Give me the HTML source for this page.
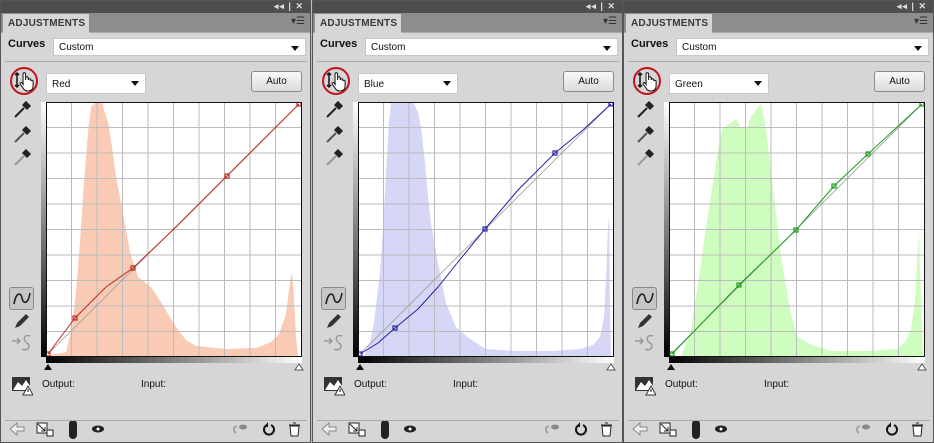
<!DOCTYPE html>
<html><head><meta charset="utf-8"><style>
*{margin:0;padding:0;box-sizing:border-box}
body{width:934px;height:443px;background:#bdbdbd;position:relative;overflow:hidden;font-family:"Liberation Sans",sans-serif}
.p{position:absolute;top:0;width:311px;height:443px;background:#d6d6d6;border:1px solid #555;overflow:hidden}
.a{position:absolute}
.top{left:0;top:0;width:100%;height:12px;background:#4e4e4e}
.top span{position:absolute;right:6px;top:0px;font-size:9px;line-height:11px;color:#ddd;font-weight:bold;letter-spacing:1px}
.tabbar{left:0;top:12px;width:100%;height:20px;background:#8d8d8d;border-bottom:1px solid #aaa}
.tab{left:2px;top:13px;width:86px;height:20px;background:#d6d6d6;font-size:10px;font-weight:bold;color:#3a3a3a;padding:4px 0 0 5px;white-space:nowrap;letter-spacing:0.2px}
.menu{right:5px;top:16px;font-size:10px;line-height:10px;color:#333}
.lbl{font-size:11px;font-weight:bold;color:#111}
.dd{background:#fff;border:1px solid #c8c8c8;font-size:10px;color:#111;padding:3px 0 0 5px}
.dd:after{content:"";position:absolute;right:6px;top:7px;border-left:4px solid transparent;border-right:4px solid transparent;border-top:5px solid #111}
.sep{height:1px;background:#a9a9a9}
.auto{left:250px;top:70px;width:51px;height:21px;border:1px solid #8a8a8a;border-radius:3px;background:linear-gradient(#f8f8f8,#dcdcdc);font-size:10px;text-align:center;padding-top:4px;color:#111}
.circ{left:9px;top:66px;width:28px;height:28px;border:2px solid #c0141c;border-radius:50%}
.graph{left:45px;top:101px}
.vg{left:40px;top:101px;width:5px;height:255px;background:linear-gradient(#fff,#000)}
.hg{left:45px;top:356px;width:256px;height:6px;background:linear-gradient(90deg,#000,#fff)}
.txt{font-size:10px;color:#111}
.btn{left:8px;top:286px;width:25px;height:23px;border:1px solid #8a8a8a;border-radius:3px;background:#c6c6c6}
</style></head><body>

<!-- PANEL 1 -->
<div class="p" style="left:0">
<div class="a top"><span>◂◂ | ✕</span></div>
<div class="a tabbar"></div>
<div class="a tab">ADJUSTMENTS</div>
<div class="a menu">▾☰</div>
<div class="a lbl" style="left:7px;top:37px">Curves</div>
<div class="a dd" style="left:52px;top:37px;width:253px;height:18px">Custom</div>
<div class="a sep" style="left:4px;top:60px;width:302px"></div>
<div class="a circ"></div>
<svg class="a" style="left:12px;top:70px" width="22" height="22" viewBox="0 0 22 22"><path d="M4 2v14M2 4l2-2 2 2M2 14l2 2 2-2" stroke="#111" fill="none" stroke-width="1.5"/><path d="M10 8v-5a1.3 1.3 0 0 1 2.6 0v6v-2a1.3 1.3 0 0 1 2.6 0v2a1.3 1.3 0 0 1 2.6 0v1a1.3 1.3 0 0 1 2.3 0v5c0 3-2 5-5 5h-1c-2 0-3-1-4-3l-3-4c-.5-1 1-2 2-1l1 1.5z" fill="#fff" stroke="#111"/></svg>
<div class="a dd" style="left:45px;top:72px;width:100px;height:21px;padding-top:5px">Red</div>
<div class="a auto">Auto</div>
<svg class="a" style="left:11px;top:100px" width="20" height="66" viewBox="0 0 20 66"><g stroke="#222" stroke-width="1.5"><path d="M3 16l9-9" stroke-width="2"/><path d="M11 4l3-3 4 4-3 3z" fill="#222"/><path d="M3 41l9-9" stroke="#555" stroke-width="2"/><path d="M11 29l3-3 4 4-3 3z" fill="#222"/><path d="M3 64l9-9" stroke="#999" stroke-width="2"/><path d="M11 52l3-3 4 4-3 3z" fill="#222"/></g></svg>
<div class="a vg"></div>
<svg class="a graph" width="256" height="255" viewBox="0 0 256 255">
<rect x="0" y="0" width="256" height="255" fill="#fff"/>
<polygon fill="#f9cbb5" points="0,254 20,250 26,225 30,190 34,140 38,80 42,30 45,5 50,0 56,0 58,8 62,20 66,45 70,75 76,105 80,128 84,150 92,175 105,185 115,200 122,212 130,225 140,238 150,244 180,247 210,246 225,240 233,232 240,212 244,180 246,170 248,195 250,235 252,254"/>
<g stroke="#bbb" stroke-width="1"><path d="M25.5 0v255M51 0v255M76.5 0v255M102 0v255M127.5 0v255M153 0v255M178.5 0v255M204 0v255M229.5 0v255M0 25.5h256M0 51h256M0 76.5h256M0 102h256M0 127.5h256M0 153h256M0 178.5h256M0 204h256M0 229.5h256"/></g>
<path d="M2 252L253 2" stroke="#999" stroke-width="0.8"/>
<polyline fill="none" stroke="#c02a1c" stroke-width="1" points="2,252 29,216 60,185 87,166 130,125 181,74 253,2"/>
<g fill="none" stroke="#c02a1c" stroke-width="1.2"><rect x="0" y="250" width="4" height="4"/><rect x="27" y="214" width="4" height="4"/><rect x="85" y="164" width="4" height="4"/><rect x="179" y="72" width="4" height="4"/><rect x="251" y="0" width="4" height="4"/></g>
<rect x="0.5" y="0.5" width="255" height="254" fill="none" stroke="#111"/>
</svg>
<div class="a hg"></div>
<svg class="a" style="left:42px;top:362px" width="262" height="8"><path d="M1 7l4-6 4 6z" fill="#111"/><path d="M252 7l4-6 4 6z" fill="#fff" stroke="#555"/></svg>
<div class="a btn"></div>
<svg class="a" style="left:10px;top:288px" width="22" height="19"><path d="M3 15C5 3 10 3 11 9s6 7 8-5" fill="none" stroke="#222" stroke-width="1.6"/></svg>
<svg class="a" style="left:11px;top:311px" width="20" height="18"><path d="M3 16l2-5 9-9 3 3-9 9z" fill="#333"/></svg>
<svg class="a" style="left:9px;top:332px" width="24" height="20" fill="none" stroke="#999" stroke-width="1.5"><path d="M2 8h8M7 5l3 3-3 3"/><path d="M20 3c-6-2-8 4-3 7s0 9-5 6"/></svg>
<svg class="a" style="left:10px;top:375px" width="22" height="20"><rect x="1" y="1" width="18" height="14" fill="#333"/><path d="M2 14l5-8 4 4 4-6 4 6v4z" fill="#fff"/><path d="M12 19l5-9 5 9z" fill="#fff" stroke="#333"/><path d="M17 13v3" stroke="#111"/></svg>
<div class="a txt" style="left:41px;top:378px">Output:</div>
<div class="a txt" style="left:140px;top:378px">Input:</div>
<div class="a sep" style="left:4px;top:419px;width:302px"></div>
<svg class="a" style="left:6px;top:420px" width="300" height="18"><path d="M3 8l7-6v4h7v4h-7v4z" fill="#eee" stroke="#888"/><rect x="30" y="2" width="10" height="10" fill="#fff" stroke="#222"/><path d="M31 3l7 7M38 6v4h-4" stroke="#222" fill="none"/><rect x="40" y="9" width="6" height="6" fill="#fff" stroke="#222"/><path d="M62 3a4 4 0 0 1 8 0v11a4 4 0 0 1-8 0z" fill="#222"/><ellipse cx="91" cy="8" rx="6" ry="3.5" fill="#222"/><circle cx="91" cy="8" r="1.5" fill="#fff"/><path d="M229 12c-3-2-3-6 1-7" stroke="#999" fill="none" stroke-width="1.6"/><ellipse cx="236" cy="6" rx="4" ry="2.5" fill="#888"/><path d="M260 4a5 5 0 1 0 4 0" stroke="#111" stroke-width="2" fill="none"/><path d="M261 1v5h-4" fill="#111"/><path d="M283 5h9l-1 10h-7z" fill="#fff" stroke="#222"/><path d="M282 4h11M286 2h3" stroke="#222"/></svg>
</div>

<!-- PANEL 2 -->
<div class="p" style="left:312px">
<div class="a top"><span>◂◂ | ✕</span></div>
<div class="a tabbar"></div>
<div class="a tab">ADJUSTMENTS</div>
<div class="a menu">▾☰</div>
<div class="a lbl" style="left:7px;top:37px">Curves</div>
<div class="a dd" style="left:52px;top:37px;width:253px;height:18px">Custom</div>
<div class="a sep" style="left:4px;top:60px;width:302px"></div>
<div class="a circ"></div>
<svg class="a" style="left:12px;top:70px" width="22" height="22" viewBox="0 0 22 22"><path d="M4 2v14M2 4l2-2 2 2M2 14l2 2 2-2" stroke="#111" fill="none" stroke-width="1.5"/><path d="M10 8v-5a1.3 1.3 0 0 1 2.6 0v6v-2a1.3 1.3 0 0 1 2.6 0v2a1.3 1.3 0 0 1 2.6 0v1a1.3 1.3 0 0 1 2.3 0v5c0 3-2 5-5 5h-1c-2 0-3-1-4-3l-3-4c-.5-1 1-2 2-1l1 1.5z" fill="#fff" stroke="#111"/></svg>
<div class="a dd" style="left:45px;top:72px;width:100px;height:21px;padding-top:5px">Blue</div>
<div class="a auto">Auto</div>
<svg class="a" style="left:11px;top:100px" width="20" height="66" viewBox="0 0 20 66"><g stroke="#222" stroke-width="1.5"><path d="M3 16l9-9" stroke-width="2"/><path d="M11 4l3-3 4 4-3 3z" fill="#222"/><path d="M3 41l9-9" stroke="#555" stroke-width="2"/><path d="M11 29l3-3 4 4-3 3z" fill="#222"/><path d="M3 64l9-9" stroke="#999" stroke-width="2"/><path d="M11 52l3-3 4 4-3 3z" fill="#222"/></g></svg>
<div class="a vg"></div>
<svg class="a graph" width="256" height="255" viewBox="0 0 256 255">
<rect x="0" y="0" width="256" height="255" fill="#fff"/>
<polygon fill="#d6d6f7" points="6,254 12,240 16,220 22,170 25,127 28,71 31,20 33,0 55,0 60,10 63,25 67,61 70,95 73,121 80,161 88,201 98,225 112,237 128,247 160,249 195,249 222,247 235,243 242,235 246,215 248,177 250,125 251,114 252,200 253,254"/>
<g stroke="#bbb" stroke-width="1"><path d="M25.5 0v255M51 0v255M76.5 0v255M102 0v255M127.5 0v255M153 0v255M178.5 0v255M204 0v255M229.5 0v255M0 25.5h256M0 51h256M0 76.5h256M0 102h256M0 127.5h256M0 153h256M0 178.5h256M0 204h256M0 229.5h256"/></g>
<path d="M2 252L253 2" stroke="#999" stroke-width="0.8"/>
<polyline fill="none" stroke="#2424a8" stroke-width="1" points="2,252 20,241 37,226 60,207 80,185 100,160 127,127 160,88 197,51 225,28 253,2"/>
<g fill="none" stroke="#2424a8" stroke-width="1.2"><rect x="0" y="250" width="4" height="4"/><rect x="35" y="224" width="4" height="4"/><rect x="125" y="125" width="4" height="4"/><rect x="195" y="49" width="4" height="4"/><rect x="251" y="0" width="4" height="4"/></g>
<rect x="0.5" y="0.5" width="255" height="254" fill="none" stroke="#111"/>
</svg>
<div class="a hg"></div>
<svg class="a" style="left:42px;top:362px" width="262" height="8"><path d="M1 7l4-6 4 6z" fill="#111"/><path d="M252 7l4-6 4 6z" fill="#fff" stroke="#555"/></svg>
<div class="a btn"></div>
<svg class="a" style="left:10px;top:288px" width="22" height="19"><path d="M3 15C5 3 10 3 11 9s6 7 8-5" fill="none" stroke="#222" stroke-width="1.6"/></svg>
<svg class="a" style="left:11px;top:311px" width="20" height="18"><path d="M3 16l2-5 9-9 3 3-9 9z" fill="#333"/></svg>
<svg class="a" style="left:9px;top:332px" width="24" height="20" fill="none" stroke="#999" stroke-width="1.5"><path d="M2 8h8M7 5l3 3-3 3"/><path d="M20 3c-6-2-8 4-3 7s0 9-5 6"/></svg>
<svg class="a" style="left:10px;top:375px" width="22" height="20"><rect x="1" y="1" width="18" height="14" fill="#333"/><path d="M2 14l5-8 4 4 4-6 4 6v4z" fill="#fff"/><path d="M12 19l5-9 5 9z" fill="#fff" stroke="#333"/><path d="M17 13v3" stroke="#111"/></svg>
<div class="a txt" style="left:41px;top:378px">Output:</div>
<div class="a txt" style="left:140px;top:378px">Input:</div>
<div class="a sep" style="left:4px;top:419px;width:302px"></div>
<svg class="a" style="left:6px;top:420px" width="300" height="18"><path d="M3 8l7-6v4h7v4h-7v4z" fill="#eee" stroke="#888"/><rect x="30" y="2" width="10" height="10" fill="#fff" stroke="#222"/><path d="M31 3l7 7M38 6v4h-4" stroke="#222" fill="none"/><rect x="40" y="9" width="6" height="6" fill="#fff" stroke="#222"/><path d="M62 3a4 4 0 0 1 8 0v11a4 4 0 0 1-8 0z" fill="#222"/><ellipse cx="91" cy="8" rx="6" ry="3.5" fill="#222"/><circle cx="91" cy="8" r="1.5" fill="#fff"/><path d="M229 12c-3-2-3-6 1-7" stroke="#999" fill="none" stroke-width="1.6"/><ellipse cx="236" cy="6" rx="4" ry="2.5" fill="#888"/><path d="M260 4a5 5 0 1 0 4 0" stroke="#111" stroke-width="2" fill="none"/><path d="M261 1v5h-4" fill="#111"/><path d="M283 5h9l-1 10h-7z" fill="#fff" stroke="#222"/><path d="M282 4h11M286 2h3" stroke="#222"/></svg>
</div>

<!-- PANEL 3 -->
<div class="p" style="left:623px">
<div class="a top"><span>◂◂ | ✕</span></div>
<div class="a tabbar"></div>
<div class="a tab">ADJUSTMENTS</div>
<div class="a menu">▾☰</div>
<div class="a lbl" style="left:7px;top:37px">Curves</div>
<div class="a dd" style="left:52px;top:37px;width:253px;height:18px">Custom</div>
<div class="a sep" style="left:4px;top:60px;width:302px"></div>
<div class="a circ"></div>
<svg class="a" style="left:12px;top:70px" width="22" height="22" viewBox="0 0 22 22"><path d="M4 2v14M2 4l2-2 2 2M2 14l2 2 2-2" stroke="#111" fill="none" stroke-width="1.5"/><path d="M10 8v-5a1.3 1.3 0 0 1 2.6 0v6v-2a1.3 1.3 0 0 1 2.6 0v2a1.3 1.3 0 0 1 2.6 0v1a1.3 1.3 0 0 1 2.3 0v5c0 3-2 5-5 5h-1c-2 0-3-1-4-3l-3-4c-.5-1 1-2 2-1l1 1.5z" fill="#fff" stroke="#111"/></svg>
<div class="a dd" style="left:45px;top:72px;width:100px;height:21px;padding-top:5px">Green</div>
<div class="a auto">Auto</div>
<svg class="a" style="left:11px;top:100px" width="20" height="66" viewBox="0 0 20 66"><g stroke="#222" stroke-width="1.5"><path d="M3 16l9-9" stroke-width="2"/><path d="M11 4l3-3 4 4-3 3z" fill="#222"/><path d="M3 41l9-9" stroke="#555" stroke-width="2"/><path d="M11 29l3-3 4 4-3 3z" fill="#222"/><path d="M3 64l9-9" stroke="#999" stroke-width="2"/><path d="M11 52l3-3 4 4-3 3z" fill="#222"/></g></svg>
<div class="a vg"></div>
<svg class="a graph" width="256" height="255" viewBox="0 0 256 255">
<rect x="0" y="0" width="256" height="255" fill="#fff"/>
<polygon fill="#cffcbf" points="12,254 18,240 22,227 27,195 32,161 37,125 42,94 48,55 53,27 60,22 67,17 72,25 78,27 82,15 85,11 90,4 92,2 95,15 97,27 101,60 105,94 109,130 113,161 118,190 122,211 128,234 140,242 150,245 162,249 200,249 228,247 236,240 242,227 246,200 248,161 250,127 251,170 252,194 254,254"/>
<g stroke="#bbb" stroke-width="1"><path d="M25.5 0v255M51 0v255M76.5 0v255M102 0v255M127.5 0v255M153 0v255M178.5 0v255M204 0v255M229.5 0v255M0 25.5h256M0 51h256M0 76.5h256M0 102h256M0 127.5h256M0 153h256M0 178.5h256M0 204h256M0 229.5h256"/></g>
<path d="M2 252L253 2" stroke="#999" stroke-width="0.8"/>
<polyline fill="none" stroke="#1c9c1c" stroke-width="1" points="3,252 70,183 127,128 165,84 199,52 253,2"/>
<g fill="none" stroke="#1c9c1c" stroke-width="1.2"><rect x="1" y="250" width="4" height="4"/><rect x="68" y="181" width="4" height="4"/><rect x="125" y="126" width="4" height="4"/><rect x="163" y="82" width="4" height="4"/><rect x="197" y="50" width="4" height="4"/><rect x="251" y="0" width="4" height="4"/></g>
<rect x="0.5" y="0.5" width="255" height="254" fill="none" stroke="#111"/>
</svg>
<div class="a hg"></div>
<svg class="a" style="left:42px;top:362px" width="262" height="8"><path d="M1 7l4-6 4 6z" fill="#111"/><path d="M252 7l4-6 4 6z" fill="#fff" stroke="#555"/></svg>
<div class="a btn"></div>
<svg class="a" style="left:10px;top:288px" width="22" height="19"><path d="M3 15C5 3 10 3 11 9s6 7 8-5" fill="none" stroke="#222" stroke-width="1.6"/></svg>
<svg class="a" style="left:11px;top:311px" width="20" height="18"><path d="M3 16l2-5 9-9 3 3-9 9z" fill="#333"/></svg>
<svg class="a" style="left:9px;top:332px" width="24" height="20" fill="none" stroke="#999" stroke-width="1.5"><path d="M2 8h8M7 5l3 3-3 3"/><path d="M20 3c-6-2-8 4-3 7s0 9-5 6"/></svg>
<svg class="a" style="left:10px;top:375px" width="22" height="20"><rect x="1" y="1" width="18" height="14" fill="#333"/><path d="M2 14l5-8 4 4 4-6 4 6v4z" fill="#fff"/><path d="M12 19l5-9 5 9z" fill="#fff" stroke="#333"/><path d="M17 13v3" stroke="#111"/></svg>
<div class="a txt" style="left:41px;top:378px">Output:</div>
<div class="a txt" style="left:140px;top:378px">Input:</div>
<div class="a sep" style="left:4px;top:419px;width:302px"></div>
<svg class="a" style="left:6px;top:420px" width="300" height="18"><path d="M3 8l7-6v4h7v4h-7v4z" fill="#eee" stroke="#888"/><rect x="30" y="2" width="10" height="10" fill="#fff" stroke="#222"/><path d="M31 3l7 7M38 6v4h-4" stroke="#222" fill="none"/><rect x="40" y="9" width="6" height="6" fill="#fff" stroke="#222"/><path d="M62 3a4 4 0 0 1 8 0v11a4 4 0 0 1-8 0z" fill="#222"/><ellipse cx="91" cy="8" rx="6" ry="3.5" fill="#222"/><circle cx="91" cy="8" r="1.5" fill="#fff"/><path d="M229 12c-3-2-3-6 1-7" stroke="#999" fill="none" stroke-width="1.6"/><ellipse cx="236" cy="6" rx="4" ry="2.5" fill="#888"/><path d="M260 4a5 5 0 1 0 4 0" stroke="#111" stroke-width="2" fill="none"/><path d="M261 1v5h-4" fill="#111"/><path d="M283 5h9l-1 10h-7z" fill="#fff" stroke="#222"/><path d="M282 4h11M286 2h3" stroke="#222"/></svg>
</div>

</body></html>
